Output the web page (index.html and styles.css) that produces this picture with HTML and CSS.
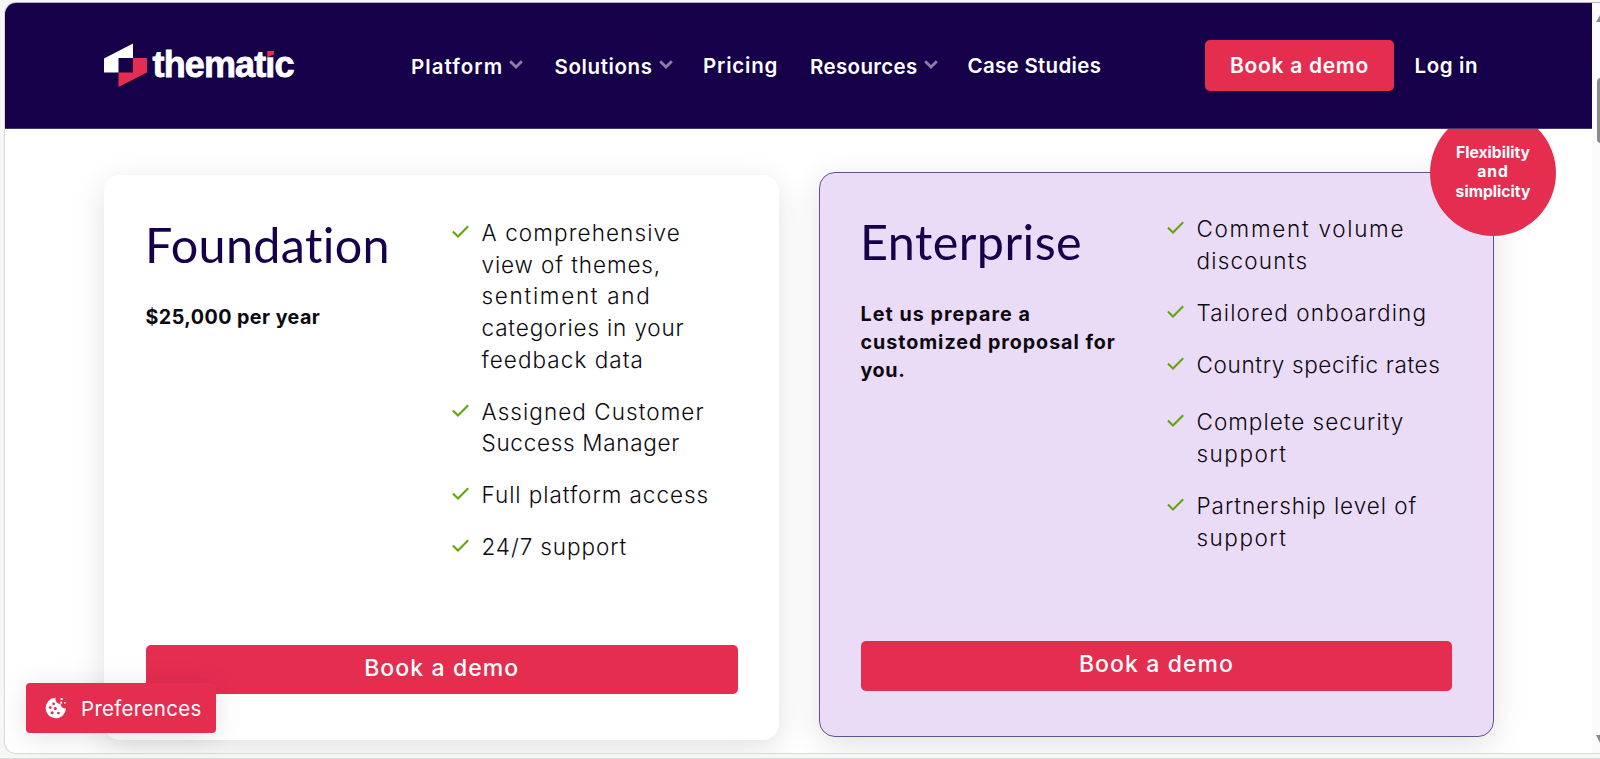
FILE: index.html
```
<!DOCTYPE html>
<html lang="en">
<head>
<meta charset="utf-8">
<title>Thematic pricing</title>
<link rel="stylesheet" href="styles.css">
</head>
<body>
<svg class="defs" width="0" height="0" aria-hidden="true">
  <symbol id="check" viewBox="0 0 17 13"><path d="M.9 6.4 6 11.4 16.2 1.2" fill="none" stroke="#62a60a" stroke-width="2.1"/></symbol>
  <symbol id="chevron" viewBox="0 0 14 9"><path d="M1.2 1.2 7 7 12.8 1.2" fill="none" stroke="#8b7fa8" stroke-width="2.8"/></symbol>
</svg>
<div class="window">
  <div class="page">
    <header class="header">
      <svg class="logo" width="192" height="46" viewBox="0 0 192 46" role="img" aria-label="thematic">
        <path d="M0 15.5 29 .5V15H14.5V29.5H0Z" fill="#fff"/>
        <path d="M29 15H43V29.5L14.5 44V29.5H29Z" fill="#e52d50"/>
        <text class="wordmark" x="48.5" y="34" textLength="142" lengthAdjust="spacing">thematic</text>
        <path d="M162 6H171V14.2H162Z" fill="#160049"/>
        <path d="M163.3 8H170V11.2L163.3 14.4Z" fill="#e52d50"/>
      </svg>
      <nav class="nav">
        <a class="nav-item low ls-105">Platform<svg class="chevron"><use href="#chevron"/></svg></a>
        <a class="nav-item low ls-60">Solutions<svg class="chevron"><use href="#chevron"/></svg></a>
        <a class="nav-item ls-80">Pricing</a>
        <a class="nav-item low ls-35">Resources<svg class="chevron"><use href="#chevron"/></svg></a>
        <a class="nav-item ls-30">Case Studies</a>
      </nav>
      <a class="demo ls-70">Book a demo</a>
      <a class="login ls-60">Log in</a>
    </header>
    <main class="plans">
      <section class="card">
        <div class="columns">
          <div class="intro">
            <h2 class="title ls-55">Foundation</h2>
            <p class="price ls-45">$25,000 per year</p>
          </div>
          <ul class="features">
            <li><svg class="check"><use href="#check"/></svg><p><span class="ls-110">A comprehensive</span><br><span class="ls-90">view of themes,</span><br><span class="ls-170">sentiment and</span><br><span class="ls-85">categories in your</span><br><span class="ls-105">feedback data</span></p></li>
            <li><svg class="check"><use href="#check"/></svg><p><span class="ls-105">Assigned Customer</span><br><span class="ls-70">Success Manager</span></p></li>
            <li><svg class="check"><use href="#check"/></svg><p><span class="ls-95">Full platform access</span></p></li>
            <li><svg class="check"><use href="#check"/></svg><p><span class="ls-90">24/7 support</span></p></li>
          </ul>
        </div>
        <a class="cta ls-110">Book a demo</a>
      </section>
      <section class="card featured">
        <div class="badge"><span>Flexibility</span><span class="ls-90">and</span><span>simplicity</span></div>
        <div class="columns">
          <div class="intro">
            <h2 class="title ls-45">Enterprise</h2>
            <p class="price"><span class="ls-105">Let us prepare a</span><br><span class="ls-95">customized proposal for</span><br><span class="ls-60">you.</span></p>
          </div>
          <ul class="features">
            <li><svg class="check"><use href="#check"/></svg><p><span class="ls-170">Comment volume</span><br><span class="ls-120">discounts</span></p></li>
            <li><svg class="check"><use href="#check"/></svg><p><span class="ls-115">Tailored onboarding</span></p></li>
            <li class="spaced"><svg class="check"><use href="#check"/></svg><p><span class="ls-65">Country specific rates</span></p></li>
            <li><svg class="check"><use href="#check"/></svg><p><span class="ls-100">Complete security</span><br><span class="ls-150">support</span></p></li>
            <li><svg class="check"><use href="#check"/></svg><p><span class="ls-95">Partnership level of</span><br><span class="ls-150">support</span></p></li>
          </ul>
        </div>
        <a class="cta ls-110">Book a demo</a>
      </section>
    </main>
  </div>
  <div class="scrollbar">
    <svg width="8" height="750" viewBox="0 0 8 750">
      <path d="M4 19 10 9V19Z" fill="#8a8a8a"/>
      <rect x="5" y="75" width="10" height="65" rx="4" fill="#8a8a8a"/>
      <path d="M4 732H12V740H8Z" fill="#8a8a8a"/>
    </svg>
  </div>
</div>
<a class="preferences">
  <svg width="22" height="22" viewBox="0 0 22 22">
    <path d="M10.5.8A10.2 10.2 0 1 0 21 11.4 4.7 4.7 0 0 1 15.6 7 5 5 0 0 1 10.5.8Z" fill="#fff"/>
    <g fill="#e52d50"><circle cx="8.6" cy="6.8" r="1.4"/><circle cx="5.3" cy="10.6" r="1.4"/><circle cx="10.3" cy="11.4" r="1.5"/><circle cx="7.2" cy="15.7" r="1.5"/><circle cx="13.4" cy="16.1" r="1.4"/></g>
    <g fill="#fff"><rect x="15.6" y="1" width="2" height="2"/><rect x="15.2" y="4.7" width="1.9" height="1.9"/><rect x="19" y="5" width="1.6" height="1.6"/></g>
  </svg>
  <span class="ls-30">Preferences</span>
</a>
</body>
</html>
```
FILE: styles.css
```
* { box-sizing: border-box; }
html { height: 100%; overflow: hidden; }
body {
  margin: 0;
  height: 759px;
  padding: 2px 0 5px 4px;
  overflow: hidden;
  background: #f6f6f6;
  border-bottom: 1px solid #d3dcde;
  font-family: Inter, "Liberation Sans", sans-serif;
  color: #0c0910;
}
h2, p, ul { margin: 0; padding: 0; }
.defs { position: absolute; }

.window {
  display: flex;
  height: 752px;
  border: 1px solid #d9d9d9;
  border-top-color: #b4b4bd;
  border-right: 0;
  border-radius: 12px 0 0 12px;
  background: #fff;
  overflow: hidden;
}
.page { width: 1587px; overflow: hidden; }
.scrollbar { width: 8px; background: #fbfbfb; }
.scrollbar svg { display: block; }

.header {
  position: relative;
  z-index: 2;
  display: flex;
  height: 126px;
  padding-left: 99px;
  background: #160049;
  border-bottom: 1px solid #45356b;
  color: #fff;
  font-size: 20.5px;
  font-weight: 600;
  line-height: 28px;
  white-space: nowrap;
}
.logo { margin-top: 40px; overflow: visible; }
.wordmark {
  font: bold 36px "Liberation Sans", Arial, sans-serif;
  fill: #fff;
  stroke: #fff;
  stroke-width: .8px;
}
.nav {
  display: grid;
  grid-template-columns: 143.5px 148.5px 107px 157.5px 237.5px;
  margin: 49px 0 0 115px;
}
.nav-item.low { padding-top: 1px; }
.chevron { width: 14px; height: 9px; margin-left: 6px; vertical-align: 5px; }
.demo {
  width: 189px;
  height: 51px;
  margin-top: 37px;
  padding-left: 25px;
  border-radius: 5px;
  background: #e52d50;
  font-size: 21px;
  line-height: 51px;
}
.login { margin: 49px 0 0 20.5px; }

.plans { display: flex; gap: 40px; padding: 43px 0 0 99px; }
.card {
  position: relative;
  display: flex;
  flex-direction: column;
  width: 675px;
  height: 565px;
  margin-top: 3px;
  padding: 41px 41.5px 46px 42px;
  border-radius: 16px;
  background: #fff;
  box-shadow: 0 8px 32px rgba(0, 0, 0, .12);
}
.featured {
  margin-top: 0;
  padding: 39.5px 41px 45.5px 41px;
  border: 1px solid #66528a;
  background: #eadcf7;
}
.columns { display: flex; flex: 1; }
.intro { width: 306px; }
.title {
  margin-left: -1px;
  color: #160049;
  font: 400 48.5px/57px Lato, sans-serif;
}
.price { margin: 30px 0 0 -.5px; font-size: 19.7px; font-weight: 700; line-height: 28.3px; }
.features { padding-top: .9px; list-style: none; font-size: 22.5px; font-weight: 300; line-height: 31.7px; white-space: nowrap; }
.features li { display: flex; margin-bottom: 20.3px; }
.features .spaced { margin-bottom: 25.5px; }
.check { width: 17px; height: 13px; margin: 8px 12.5px 0 0; }
.cta {
  height: 49.5px;
  border-radius: 5px;
  background: #e52d50;
  color: #fff;
  font-size: 23px;
  font-weight: 500;
  line-height: 47.5px;
  text-align: center;
}
.badge {
  position: absolute;
  top: -63px;
  right: -63px;
  display: flex;
  flex-direction: column;
  align-items: center;
  justify-content: center;
  width: 126px;
  height: 126px;
  padding-bottom: 2px;
  border-radius: 50%;
  background: #e52d50;
  color: #fff;
  font-size: 15.7px;
  font-weight: 700;
  line-height: 19.6px;
}

.preferences {
  position: absolute;
  left: 25.5px;
  top: 683px;
  z-index: 3;
  display: flex;
  align-items: center;
  gap: 14.5px;
  width: 190px;
  height: 50px;
  padding-left: 19px;
  border-radius: 4px;
  background: #e52d50;
  box-shadow: 0 4px 28px rgba(0, 0, 0, .12);
  color: #fff;
  font-size: 20.5px;
}

/* Letter-spacing steps, in hundredths of a pixel */
.ls-30 { letter-spacing: .3px; }
.ls-35 { letter-spacing: .35px; }
.ls-45 { letter-spacing: .45px; }
.ls-55 { letter-spacing: .35px; }
.ls-60 { letter-spacing: .6px; }
.ls-65 { letter-spacing: .65px; }
.ls-70 { letter-spacing: .7px; }
.ls-80 { letter-spacing: .8px; }
.ls-85 { letter-spacing: .85px; }
.ls-90 { letter-spacing: .9px; }
.ls-95 { letter-spacing: .95px; }
.ls-100 { letter-spacing: 1px; }
.ls-105 { letter-spacing: 1.05px; }
.ls-110 { letter-spacing: 1.1px; }
.ls-115 { letter-spacing: 1.15px; }
.ls-120 { letter-spacing: 1.2px; }
.ls-150 { letter-spacing: 1.5px; }
.ls-170 { letter-spacing: 1.7px; }
```
